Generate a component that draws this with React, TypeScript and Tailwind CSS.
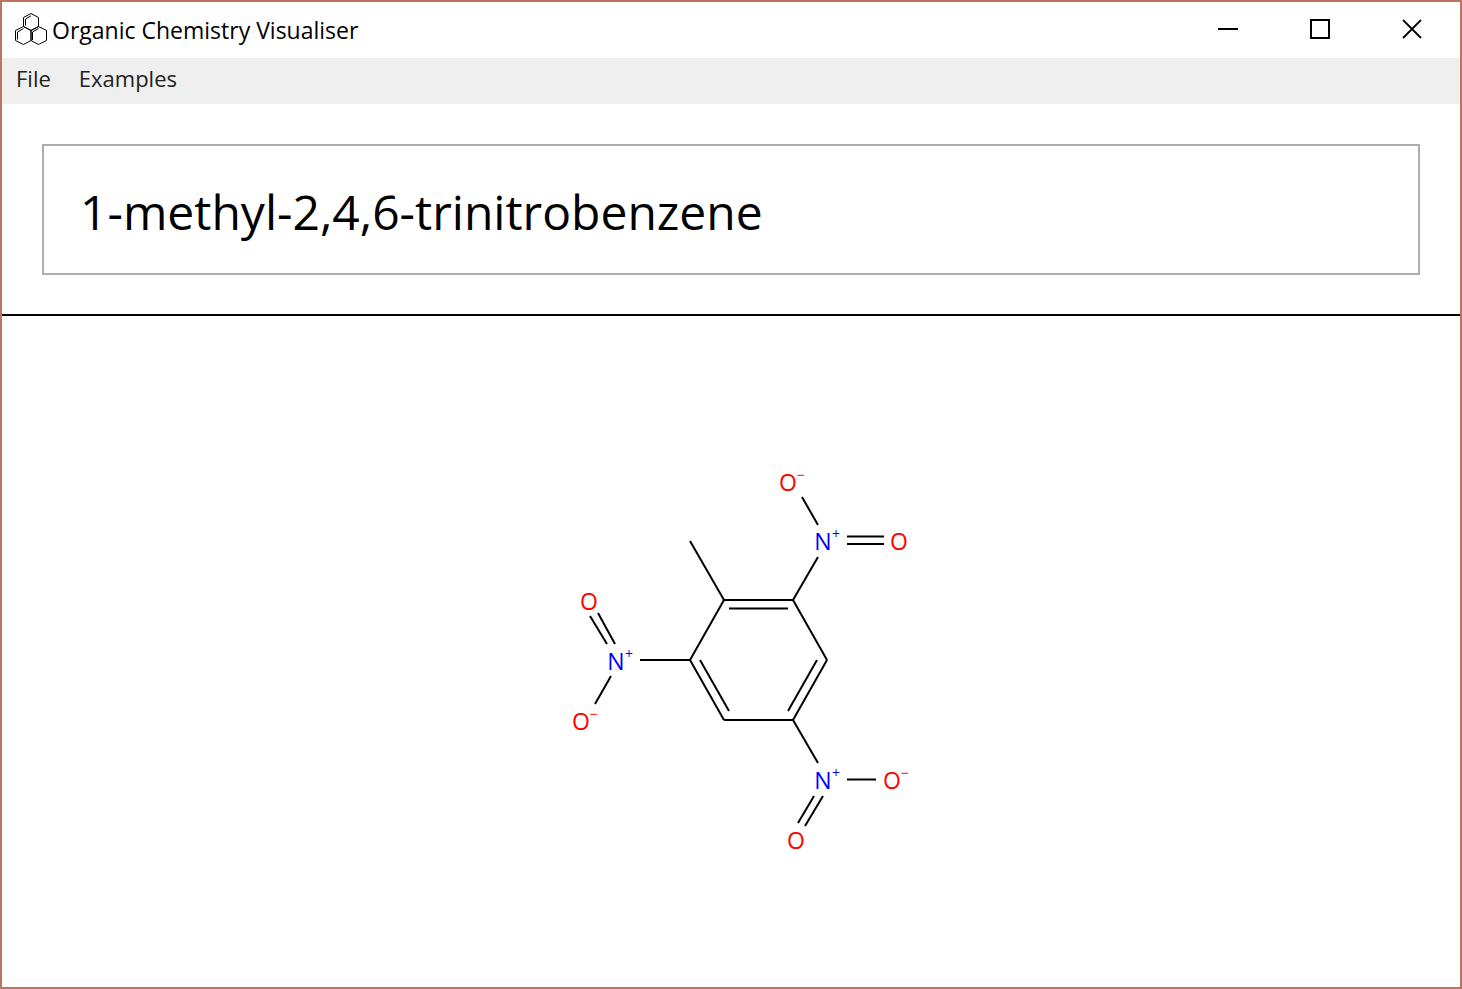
import { useState } from "react";

type Line = [number, number, number, number];

const BONDS: Line[] = [
  [690, 541, 724, 600],
  [724, 600, 793, 600],
  [729, 608.5, 788, 608.5],
  [793, 600, 827, 660],
  [827, 660, 793, 720],
  [817, 660, 788, 711],
  [793, 720, 724, 720],
  [724, 720, 690, 660],
  [700, 660, 729, 711],
  [690, 660, 724, 600],
  [793, 600, 818, 557],
  [818, 525, 802, 497],
  [847, 536.5, 884, 536.5],
  [847, 544, 884, 544],
  [690, 660, 640, 660],
  [607, 644, 590, 616],
  [615, 644, 598, 613],
  [611, 676, 595, 704],
  [793, 720, 818, 763],
  [847, 779.500, 876, 779.5],
  [814, 796, 798, 823],
  [823, 796, 805, 826],
];

type Atom = { x: number; y: number; symbol: "N" | "O"; charge?: "+" | "−" };

const ATOMS: Atom[] = [
  { x: 788, y: 491, symbol: "O", charge: "−" },
  { x: 823, y: 550, symbol: "N", charge: "+" },
  { x: 899, y: 550, symbol: "O" },
  { x: 589, y: 610, symbol: "O" },
  { x: 616, y: 670, symbol: "N", charge: "+" },
  { x: 581, y: 730, symbol: "O", charge: "−" },
  { x: 823, y: 789, symbol: "N", charge: "+" },
  { x: 892, y: 789, symbol: "O", charge: "−" },
  { x: 796, y: 849, symbol: "O" },
];

function AppIcon() {
  return (
    <svg width="32" height="32" viewBox="0 0 32 32" fill="none" stroke="black" aria-hidden="true">
      <path d="M16 .5 23.500 4.500V13.500L16 17.500 8.500 13.500V4.500Z M8.500 13.500 16 17.500V27.500L8.500 31.500.5 27.500V17.500Z M23.500 13.500 31.500 17.500V27.500L23.500 31.500 16 27.500V17.500Z" />
      <path d="M10.500 12.500V6L16 2.800 M2.500 26.500V19L8.500 15.500 M17.500 27V19L23.500 15.500" />
    </svg>
  );
}

function Molecule() {
  return (
    <svg width="380" height="440" viewBox="541 432 380 440" role="img" aria-label="Skeletal structure">
      <g stroke="black" strokeWidth="2">
        {BONDS.map(([x1, y1, x2, y2], i) => (
          <line key={i} x1={x1} y1={y1} x2={x2} y2={y2} />
        ))}
      </g>
      {ATOMS.map((a, i) => (
        <g key={i} className={a.symbol === "N" ? "fill-[#0000ff]" : "fill-[#ff0000]"}>
          <text x={a.x} y={a.y} textAnchor="middle" className="text-[23px]">
            {a.symbol}
          </text>
          {a.charge && (
            <text x={a.x + 13} y={a.y - 11} textAnchor="middle" className="text-[14px]">
              {a.charge}
            </text>
          )}
        </g>
      ))}
    </svg>
  );
}

export default function App() {
  const [name, setName] = useState("1-methyl-2,4,6-trinitrobenzene");
  return (
    <div className="flex min-h-screen flex-col border-2 border-[#b9755f] bg-white font-['Open_Sans','Noto_Sans',sans-serif] text-black">
      <header className="flex h-14 items-center pr-0.5 pb-0.5 pl-[13px]">
        <AppIcon />
        <h1 className="flex-1 pt-0.5 pl-[5px] text-[23px] leading-8">Organic Chemistry Visualiser</h1>
        <button type="button" aria-label="Minimise" className="flex h-full w-23 items-center justify-center">
          <svg width="20" height="20" viewBox="0 0 20 20">
            <path d="M0 10H20" stroke="black" strokeWidth="2" />
          </svg>
        </button>
        <button type="button" aria-label="Maximise" className="flex h-full w-23 items-center justify-center">
          <svg width="20" height="20" viewBox="0 0 20 20">
            <path d="M1 1H19V19H1Z" fill="none" stroke="black" strokeWidth="2" />
          </svg>
        </button>
        <button type="button" aria-label="Close" className="flex h-full w-23 items-center justify-center">
          <svg width="20" height="20" viewBox="0 0 20 20">
            <path d="M1 1 19 19M19 1 1 19" stroke="black" strokeWidth="1.8" />
          </svg>
        </button>
      </header>
      <nav className="flex h-[46px] items-start gap-7 bg-[#efefef] px-3.5 pt-1 text-[22px] leading-8 text-[#212121]">
        <button type="button">File</button>
        <button type="button">Examples</button>
      </nav>
      <div className="border-b-2 border-black px-10 pt-10 pb-[39px]">
        <input
          type="text"
          aria-label="Compound name"
          value={name}
          onChange={(e) => setName(e.target.value)}
          spellCheck={false}
          className="block h-[131px] w-full border-2 border-[#abadb3] px-9 pt-1 text-[48px] outline-none"
        />
      </div>
      <main className="flex flex-1 items-center justify-center">
        <Molecule />
      </main>
    </div>
  );
}
